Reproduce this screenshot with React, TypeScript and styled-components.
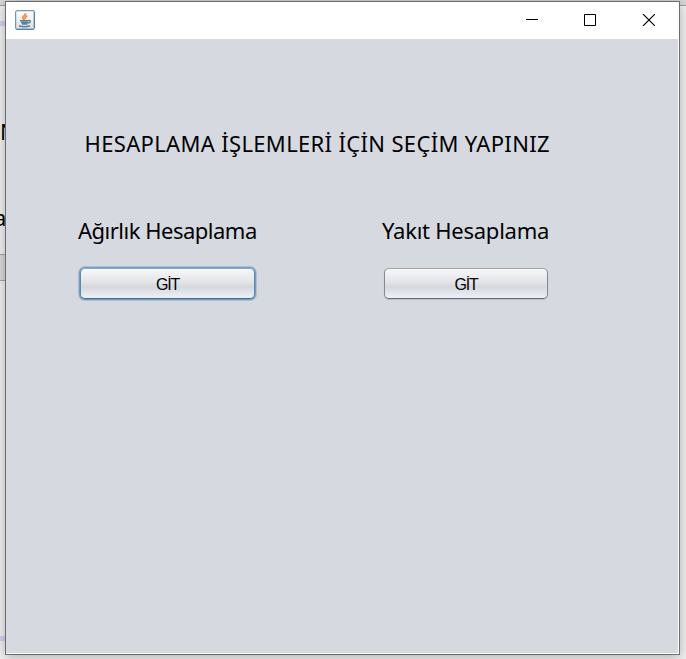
import React from 'react';
import styled, { createGlobalStyle } from 'styled-components';

const GlobalStyle = createGlobalStyle`
  * { box-sizing: border-box; }
  body { margin: 0; background: #e9e9e9; overflow: hidden; }
`;

const Desktop = styled.div`
  position: relative;
  width: 686px;
  height: 659px;
  padding: 1px 0 0 5px;
  overflow: hidden;
  background: linear-gradient(#d8d8d8 0 5px, #a0a0a0 5px 6px, #f3f3f3 6px);
  font-family: 'Noto Sans', sans-serif;
  color: #000;
`;

const Behind = styled.div`
  position: absolute;
  left: 0;
  top: 0;
  width: 6px;
  height: 659px;
  overflow: hidden;
`;

const Stripe = styled.div<{ $top: number }>`
  position: absolute;
  top: ${(p) => p.$top}px;
  width: 6px;
  height: 5px;
  background: #d5d3f2;
`;

const HiddenButton = styled.div`
  position: absolute;
  top: 254px;
  width: 6px;
  height: 27px;
  border: solid #a8a8a8;
  border-width: 1px 0;
  background: #dcdcdc;
`;

const Clipped = styled.span<{ $top: number; $left: number }>`
  position: absolute;
  top: ${(p) => p.$top}px;
  left: ${(p) => p.$left}px;
  font-size: 22px;
  line-height: 28px;
`;

const Window = styled.main`
  position: relative;
  display: flex;
  flex-direction: column;
  width: 675px;
  height: 654px;
  border: 1px solid #6c6c6e;
  background: #fff;
  box-shadow: 0 2px 12px rgba(0, 0, 0, 0.3);
`;

const TitleBar = styled.header`
  display: flex;
  align-items: center;
  justify-content: space-between;
  flex: 0 0 37px;
  padding: 0 24px 2px 9px;
  background: #fff;

  svg { display: block; }
`;

const Controls = styled.div`
  display: flex;
  gap: 46px;
`;

const Content = styled.section`
  flex: 1;
  margin: 0 1px 1px 0;
  padding: 90px 0 0 72px;
  background: #d6d9e0;
`;

const Heading = styled.h1`
  margin: 0 0 0 6.5px;
  font-size: 22px;
  font-weight: 400;
  line-height: 28px;
  letter-spacing: 0.34px;
  white-space: nowrap;
`;

const Choices = styled.div`
  display: grid;
  grid-template-columns: 304px 180px;
  margin-top: 59px;
`;

const Choice = styled.div`
  display: flex;
  flex-direction: column;
  align-items: flex-start;
`;

const Label = styled.span<{ $spacing: number }>`
  font-size: 22px;
  line-height: 28px;
  letter-spacing: ${(p) => p.$spacing}px;
  white-space: nowrap;
`;

const GoButton = styled.button<{ $focused?: boolean }>`
  width: ${(p) => (p.$focused ? 175 : 164)}px;
  height: 31px;
  margin: 24px 0 0 2px;
  padding: 3px 0 0;
  border: 1px solid;
  border-color: ${(p) => (p.$focused ? '#8fa9c2 #6486a9 #53697f' : '#a5a7ac #85888e #65686e')};
  border-radius: 5px;
  background: linear-gradient(#f8f8fa, #e3e4e7 45%, #d5d8dc 62%, #eff1fa);
  background-clip: padding-box;
  box-shadow: ${(p) => (p.$focused ? '0 0 0 1px #739cc2, 0 0 0 2px #a8bfd6' : '0 1px 1px #bcbfc6')};
  color: #000;
  font: 16px/20px 'Liberation Sans', sans-serif;
  letter-spacing: -1.2px;
  outline: none;
`;

const JavaIcon = () => (
  <svg width="20" height="20" viewBox="0 0 20 20" fill="none">
    <defs>
      <linearGradient id="tile" x1="0" y1="0" x2="0" y2="1">
        <stop stopColor="#fff" />
        <stop offset="1" stopColor="#d8e0e6" />
      </linearGradient>
    </defs>
    <rect x=".6" y=".6" width="18.8" height="18.8" rx="1.8" fill="url(#tile)" stroke="#7895a9" strokeWidth="1.2" />
    <path d="M1.5 19.3h17M19.3 2v16" stroke="#547b99" />
    <path d="M10.5 3.2c.8 2-3.5 2.8-2.6 4.8.3.8 1 1.3 1.5 2M12.3 5.8c-3 1.3-2.5 2.2-1.6 3.2" stroke="#ee8a3d" strokeWidth="1.7" />
    <path d="M5 10.8h8.5M6 12.5h7M7 14h5.5M4 15.8c2.8 1 8.2 1 11 0M13.5 10.6c3-.5 2 2.3-.5 2.5" stroke="#5a7f98" strokeWidth="1.5" />
  </svg>
);

export default function App() {
  return (
    <>
      <GlobalStyle />
      <Desktop>
        <Behind>
          <Stripe $top={21} />
          <Clipped $top={117} $left={0}>N</Clipped>
          <Clipped $top={203} $left={-6}>a</Clipped>
          <HiddenButton />
          <Stripe $top={636} />
        </Behind>
        <Window>
          <TitleBar>
            <JavaIcon />
            <Controls>
              <svg width="12" height="12" stroke="#000"><path d="M0 5.5h12" /></svg>
              <svg width="12" height="12" fill="none" stroke="#000"><path d="M.5 .5h11v11H.5z" /></svg>
              <svg width="13" height="12" stroke="#000" strokeWidth="1.1"><path d="M1 0l12 12M13 0L1 12" /></svg>
            </Controls>
          </TitleBar>
          <Content>
            <Heading>HESAPLAMA İŞLEMLERİ İÇİN SEÇİM YAPINIZ</Heading>
            <Choices>
              <Choice>
                <Label $spacing={-0.5}>Ağırlık Hesaplama</Label>
                <GoButton $focused>GİT</GoButton>
              </Choice>
              <Choice>
                <Label $spacing={-0.25}>Yakıt Hesaplama</Label>
                <GoButton>GİT</GoButton>
              </Choice>
            </Choices>
          </Content>
        </Window>
      </Desktop>
    </>
  );
}
